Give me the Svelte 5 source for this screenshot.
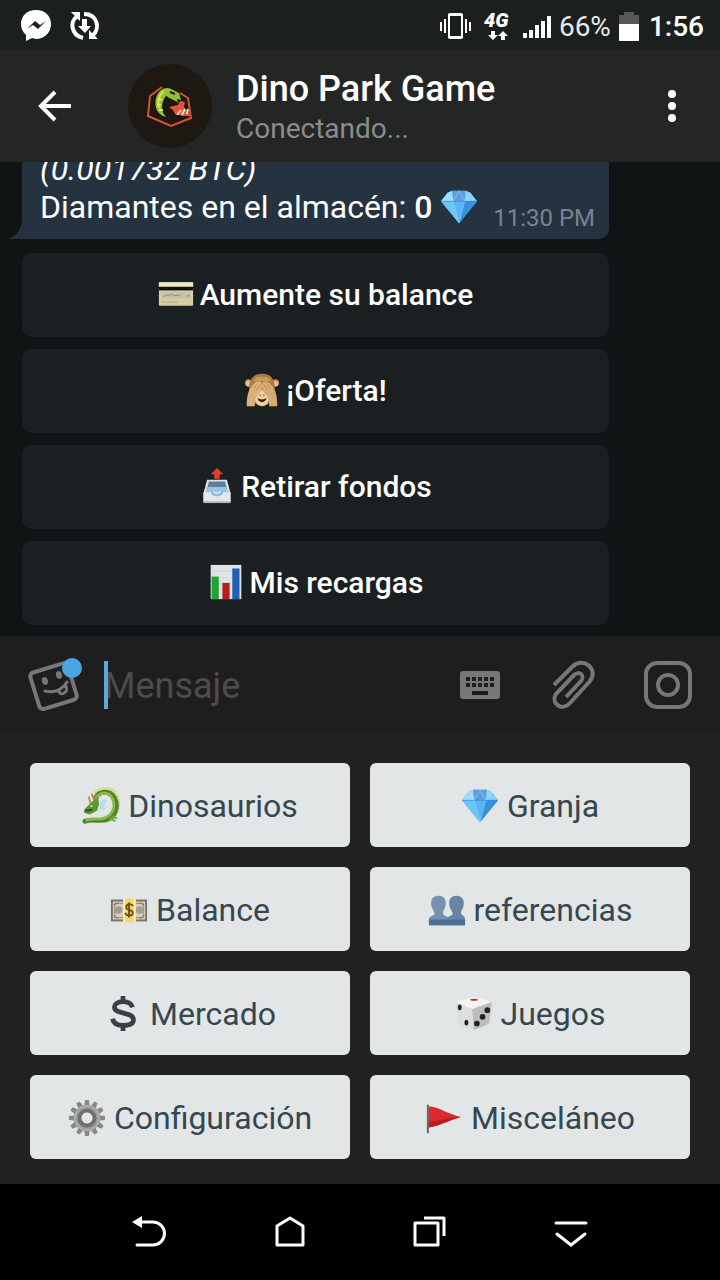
<script lang="ts">
  type Item = { icon: string; label: string }

  const actions: Item[] = [
    { icon: 'card', label: 'Aumente su balance' },
    { icon: 'monkey', label: '¡Oferta!' },
    { icon: 'outbox', label: 'Retirar fondos' },
    { icon: 'chart', label: 'Mis recargas' },
  ]

  const keys: Item[] = [
    { icon: 'dragon', label: 'Dinosaurios' },
    { icon: 'gem', label: 'Granja' },
    { icon: 'cash', label: 'Balance' },
    { icon: 'people', label: 'referencias' },
    { icon: 'dollar', label: 'Mercado' },
    { icon: 'die', label: 'Juegos' },
    { icon: 'gear', label: 'Configuración' },
    { icon: 'flag', label: 'Misceláneo' },
  ]

  const teeth = Array.from({ length: 12 }, (_, i) => i * 30)
  const keyDots = [0, 1, 2, 3, 4]

  let message = $state('')
</script>

<!-- every emoji is drawn on a 40x40 grid -->
{#snippet emoji(name: string)}
  <svg class="emoji" viewBox="0 0 40 40" aria-hidden="true">
    {#if name === 'card'}
      <rect x="1" y="7" width="38" height="26" rx="1" fill="#d6cda6" />
      <rect x="1" y="7" width="38" height="5" fill="#efe6c0" />
      <rect x="1" y="12" width="38" height="4" fill="#11110c" />
      <rect x="4" y="18" width="32" height="7" fill="#c6c2a8" />
      <path d="M6 23l3-2 2 1 4-2 2 2 8-1M32 22h4" fill="none" stroke="#8d8f88" />
      <path d="M4 29h18" stroke="#c4b98f" stroke-width="2" />
    {:else if name === 'monkey'}
      <circle cx="5" cy="12" r="4" fill="#c38b62" />
      <circle cx="35" cy="12" r="4" fill="#c38b62" />
      <circle cx="5" cy="13" r="3" fill="#eabf9d" />
      <circle cx="35" cy="13" r="3" fill="#eabf9d" />
      <path d="M20 2C8 2 5 11 6 20c1 10 6 18 14 18s13-8 14-18C35 11 32 2 20 2z" fill="#a87b42" />
      <path d="M20 6c-3-2-8 0-10 4h20c-2-4-7-6-10-4z" fill="#c79b5c" />
      <ellipse cx="20" cy="29" rx="8" ry="9" fill="#ecd2a0" />
      <path d="M15 29c2 2 8 2 10 0-1 6-9 6-10 0z" fill="#39180f" />
      <path d="M18 25v2M22 25v2" stroke="#76502e" />
      <path d="M19 11c-3-2-7 0-10 4-3 4-6 9-6 23h9c0-7 0-9 4-13 4-4 5-11 3-14z" fill="#dcb27a" />
      <path d="M21 11c3-2 7 0 10 4 3 4 6 9 6 23h-9c0-7 0-9-4-13-4-4-5-11-3-14z" fill="#d6aa70" />
      <path d="M11 18l3-4M14 20l4-6M29 18l-3-4M26 20l-4-6" stroke="#b88b52" />
    {:else if name === 'outbox'}
      <path d="M9 13h22l4 15v10H5V28z" fill="#dbe3ea" />
      <path d="M11 15h18l3 13H8z" fill="#5d7e99" />
      <path d="M10 21h20l2 7H8z" fill="#95c6e8" />
      <path d="M5 27h9c1 7 11 7 12 0h9v11H5z" fill="#e3e8ed" />
      <path d="M14 26c1 6 11 6 12 0" fill="#b9dcf2" stroke="#8db5d3" stroke-width="2" />
      <path d="M5 38h30" stroke="#aab3bb" stroke-width="2" />
      <path d="M20 0l7 7h-4v5h-6V7h-4z" fill="#e2402f" />
    {:else if name === 'chart'}
      <rect x="3" y="1" width="34" height="38" fill="#dfe4e6" />
      <path d="M3 8h34M3 15h34M3 22h34M3 29h34" stroke="#cdd4d7" />
      <rect x="4" y="14" width="8" height="25" fill="#1fa536" />
      <rect x="16" y="21" width="8" height="18" fill="#b5201f" />
      <rect x="27" y="5" width="8" height="34" fill="#1e5fb4" />
    {:else if name === 'gem'}
      <path d="M8 5l5-2h14l5 2 7 9-19 23L1 14z" fill="#3fa6e8" />
      <path d="M8 5l5-2 1 11H1z" fill="#9fdcfa" />
      <path d="M13 3h14l-1 11H14z" fill="#5c9fdd" />
      <path d="M27 3l5 2 7 9H26z" fill="#8bd0fa" />
      <path d="M1 14h13l6 23z" fill="#6ac6f7" />
      <path d="M14 14h12l-6 23z" fill="#58b4f4" />
      <path d="M26 14h13L20 37z" fill="#3592dc" />
      <path d="M8 5l6 9 6-11 6 11 6-9M14 14l6 23 6-23" fill="none" stroke="#bde9ff" stroke-opacity=".4" />
      <path d="M1 14h38" stroke="#2f86cc" stroke-opacity=".6" />
    {:else if name === 'dragon'}
      <path d="M14 7C20 0 32 0 36 9c5 10 1 22-8 26" fill="none" stroke="#d8d66b" stroke-width="4" stroke-dasharray="2 1" />
      <path d="M14 12C18 4 29 3 34 11c5 9 1 20-7 23-7 3-15-1-24 2" fill="none" stroke="#4a862b" stroke-width="5" stroke-linecap="round" />
      <path d="M15 11C20 5 28 5 32 12c4 9 0 17-7 20-6 3-13 0-20 3" fill="none" stroke="#8cba4b" stroke-width="3" stroke-linecap="round" />
      <path d="M17 10l-6 5-8 8-1 4 6 2 8-4 2-7z" fill="#5c9636" />
      <path d="M3 25l8-1" stroke="#29551f" stroke-width="2" />
      <path d="M9 17L7 10M13 14l-3-7" stroke="#c68b52" stroke-width="2" />
      <circle cx="10" cy="20" r="1" fill="#fff8a0" />
      <path d="M20 23c-2-6 2-11 6-9-3 2-2 6-5 9zM22 24l4-3" fill="#b9e2ee" stroke="#a4d3e2" />
      <path d="M29 33l6 3M31 31l6 2" stroke="#73a842" stroke-width="2" />
    {:else if name === 'cash'}
      <rect x="1" y="9" width="38" height="23" fill="#77736a" />
      <rect x="3" y="11" width="34" height="19" fill="#d3cec0" />
      <rect x="5" y="13" width="30" height="15" fill="none" stroke="#8d877b" />
      <circle cx="9" cy="20" r="4" fill="#a49e91" />
      <circle cx="31" cy="20" r="4" fill="#a49e91" />
      <path d="M4 15l5-3M4 26l4 3M36 15l-5-3M36 26l-4 3" stroke="#9a5f58" />
      <rect x="14" y="8" width="13" height="25" fill="#f1d876" />
      <path d="M15 8v25M26 8v25" stroke="#fff0a4" stroke-width="2" />
      <path d="M24 16c-1-3-7-3-7 1s7 2 7 6-7 4-8 0M20 12v16" fill="none" stroke="#70511a" stroke-width="2" />
    {:else if name === 'people'}
      <path d="M11 5c7 0 9 6 7 12-1 3-3 5-2 7 1 3 6 2 6 6v6H1v-6c0-4 5-3 6-6 0-2-2-4-3-7C2 11 4 5 11 5z" fill="#7592ad" />
      <path d="M30 5c7 0 9 6 7 12-1 3-3 5-2 7 1 2 4 2 4 6v6H20v-6c0-4 5-3 6-6 0-2-2-4-3-7-2-6 0-12 7-12z" fill="#6685a3" />
      <path d="M1 30h38v6H1z" fill="#4c7094" />
    {:else if name === 'dollar'}
      <path d="M30 13c-1-4-4-6-10-6-6 0-9 3-9 6 0 8 20 4 20 13 0 4-4 6-11 6-6 0-10-2-11-7" fill="none" stroke="#3b4042" stroke-width="5" />
      <path d="M20 1v6M20 32v6" stroke="#3b4042" stroke-width="5" />
    {:else if name === 'die'}
      <path d="M20 2L3 6q-2 1-2 4l3 20q0 2 2 3l12 4q3 1 6 0l12-7q2-1 2-3l2-17q0-3-3-4z" fill="#dededd" />
      <path d="M20 2L3 6q-2 1-1 2l14 6q2 1 4 0l17-6q1-1-1-2z" fill="#f5f4f2" />
      <path d="M18 15l19-7q2 1 1 5l-2 15q0 2-2 3l-14 6z" fill="#bcbdbd" />
      <ellipse cx="20" cy="5" rx="4" ry="1" fill="#c9292b" />
      <g fill="#202224">
        <ellipse cx="5" cy="13" rx="2" ry="3" />
        <ellipse cx="12" cy="29" rx="2" ry="3" />
        <circle cx="34" cy="16" r="3" />
        <circle cx="29" cy="23" r="3" />
        <circle cx="23" cy="30" r="3" />
      </g>
    {:else if name === 'gear'}
      {#each teeth as angle (angle)}
        <path d="M17 8l1-7h4l1 7z" fill="#858789" transform="rotate({angle} 20 20)" />
      {/each}
      <circle cx="20" cy="20" r="10" fill="none" stroke="#9c9ea0" stroke-width="8" />
      <circle cx="20" cy="20" r="8" fill="none" stroke="#6d6f71" stroke-width="4" />
      <circle cx="20" cy="20" r="13" fill="none" stroke="#b8babb" />
    {:else if name === 'flag'}
      <path d="M3 6v30" stroke="#5c6265" stroke-width="2" />
      <path d="M4 8c10 0 20 8 34 11C26 22 17 28 4 30z" fill="#d92b2b" />
      <path d="M4 24c12-1 22-5 34-5C26 22 17 28 4 30z" fill="#b81e24" />
    {/if}
  </svg>
{/snippet}

<div class="screen">
  <div class="status">
    <svg width="32" height="32" viewBox="0 0 32 32" aria-label="Messenger">
      <path d="M16 0C7 0 1 6 1 14c0 5 2 8 5 11v6l6-3 4 1c9 0 15-7 15-15S25 0 16 0z" fill="#fff" />
      <path d="M7 19l8-8 5 4 6-4-8 8-5-4z" fill="#1b1f1e" />
    </svg>
    <svg width="30" height="30" viewBox="0 0 30 30" aria-label="Sincronizando">
      <path d="M8 5C-1 10 1 24 13 27M14 3c14 0 16 15 9 21" fill="none" stroke="#fff" stroke-width="4" />
      <path d="M1 1h9v9zM19 19v9h9zM12 8h5v7h4l-6 7-7-7h4z" fill="#fff" />
    </svg>
    <div class="status-right">
      <svg width="32" height="28" viewBox="0 0 32 28" fill="none" stroke="#fff" aria-label="Vibración">
        <rect x="10" y="2" width="13" height="24" rx="1" stroke-width="2" />
        <path d="M9 3h15M9 25h15" stroke-width="2" />
        <path d="M6 7v14M27 7v14M2 10v9M31 10v9" stroke-width="2" />
      </svg>
      <svg class="network" width="36" height="36" viewBox="-5 -4 36 36" aria-label="4G">
        <text x="0" y="15">4G</text>
        <path d="M7 19h4v4h3l-5 5-5-5h3zM17 28h4v-4h3l-5-5-5 5h3z" fill="#fff" />
      </svg>
      <svg width="28" height="24" viewBox="0 0 28 24" fill="#fff" aria-label="Señal">
        <path d="M0 19h4v5H0zM6 16h4v8H6zM12 11h4v13h-4zM18 7h4v17h-4zM24 2h4v22h-4z" />
      </svg>
      <span class="percent">66%</span>
      <svg width="20" height="30" viewBox="0 0 20 30" aria-label="Batería">
        <path d="M5 1h10v3h5v9H0V4h5z" fill="#555857" />
        <path d="M0 13h20v17H0z" fill="#fff" />
      </svg>
      <span class="clock">1:56</span>
    </div>
  </div>

  <header>
    <button class="icon-button" aria-label="Atrás">
      <svg width="34" height="32" viewBox="0 0 34 32" fill="none" stroke="#fff" stroke-width="4">
        <path d="M17 2L3 16l14 14M3 16h30" />
      </svg>
    </button>
    <svg class="avatar" width="84" height="84" viewBox="0 0 84 84" aria-hidden="true">
      <circle cx="42" cy="42" r="42" fill="#1e1812" />
      <path d="M34 23l-12 9-2 20 23 10 20-8-3-20-8-5" fill="none" stroke="#d35432" stroke-width="2" />
      <path d="M38 53C26 50 25 36 31 28c4-5 10-5 14-2l6 3 2 7-4-1 1 4-9-5c-2-3-4-2-5 1-3 7-3 12 2 18z" fill="#93bf34" />
      <path d="M31 44c-2-7 0-13 5-17M30 35l4 1M29 40l4 1M31 46l4 0" fill="none" stroke="#d8e55d" stroke-width="2" />
      <path d="M41 43l9-2 2-4 5 1-1 5 7 9-9 0-7-2-2-4z" fill="#df5735" />
      <path d="M49 51l4-5M54 51l3-6M59 50l1-5" stroke="#e7ded2" stroke-width="2" />
      <path d="M42 28l5 2M41 35l8 4M46 52l10 1" stroke="#20180f" stroke-width="2" />
    </svg>
    <div class="peer">
      <h1>Dino Park Game</h1>
      <p>Conectando...</p>
    </div>
    <button class="icon-button" aria-label="Más opciones">
      <svg width="10" height="34" viewBox="0 0 10 34" fill="#fff">
        <circle cx="5" cy="5" r="4" /><circle cx="5" cy="17" r="4" /><circle cx="5" cy="29" r="4" />
      </svg>
    </button>
  </header>

  <main>
    <div class="bubble">
      <p>
        <em>(0.001732 BTC)</em><br />
        Diamantes en el almacén: <b>0</b>
        {@render emoji('gem')}
      </p>
      <time>11:30 PM</time>
      <svg class="tail" width="12" height="28" viewBox="0 0 12 28" aria-hidden="true">
        <path d="M12 6v22H0v-1C8 24 12 17 12 6z" fill="#25323f" />
      </svg>
    </div>
    <div class="actions">
      {#each actions as item (item.label)}
        <button>{@render emoji(item.icon)}<span>{item.label}</span></button>
      {/each}
    </div>
  </main>

  <form class="composer" onsubmit={(e) => e.preventDefault()}>
    <button type="button" class="icon-button" aria-label="Stickers">
      <svg width="54" height="54" viewBox="0 0 54 54" fill="none" stroke="#777" stroke-width="3">
        <rect x="6" y="9" width="39" height="38" rx="4" stroke-width="4" transform="rotate(-17 26 28)" />
        <path d="M17 33c9 2 17-1 22-9M30 32c2 7 11 3 8-4" stroke-linecap="round" />
        <ellipse cx="17" cy="23" rx="3" ry="4" fill="#777" stroke="none" transform="rotate(-17 17 23)" />
        <ellipse cx="31" cy="17" rx="3" ry="4" fill="#777" stroke="none" transform="rotate(-17 31 17)" />
        <circle cx="44" cy="10" r="10" fill="#4ba5e4" stroke="none" />
      </svg>
    </button>
    <div class="field">
      <input type="text" placeholder="Mensaje" aria-label="Mensaje" bind:value={message} />
    </div>
    <div class="tools">
      <button type="button" class="icon-button" aria-label="Teclado">
        <svg width="40" height="28" viewBox="0 0 40 28">
          <rect width="40" height="28" rx="3" fill="#777" />
          {#each keyDots as i (i)}
            <path d="M{6 + i * 6} 6h4v4h-4zM{6 + i * 6} 12h4v4h-4z" fill="#1e1e1e" />
          {/each}
          <path d="M12 20h16v4H12z" fill="#1e1e1e" />
        </svg>
      </button>
      <button type="button" class="icon-button" aria-label="Adjuntar">
        <svg width="48" height="50" viewBox="-4 0 48 50" fill="none" stroke="#777" stroke-width="4">
          <path d="M2 25L20 7c11-11 27 2 18 14L18 43c-8 9-20 0-14-9l18-19c6-5 11 1 7 6L14 37" />
        </svg>
      </button>
      <button type="button" class="icon-button" aria-label="Cámara">
        <svg width="48" height="48" viewBox="0 0 48 48" fill="none" stroke="#777" stroke-width="4">
          <rect x="2" y="2" width="44" height="44" rx="11" /><circle cx="24" cy="24" r="10" />
        </svg>
      </button>
    </div>
  </form>

  <div class="keyboard">
    {#each keys as item (item.label)}
      <button>{@render emoji(item.icon)}<span>{item.label}</span></button>
    {/each}
  </div>

  <nav>
    <button class="icon-button" aria-label="Volver">
      <svg width="36" height="36" viewBox="0 0 36 36" fill="none" stroke="#fff" stroke-width="3">
        <path d="M10 8h12a11 11 0 0 1 0 23H6" stroke-linecap="round" />
        <path d="M1 8l10-6v12z" fill="#fff" stroke="none" />
      </svg>
    </button>
    <button class="icon-button" aria-label="Inicio">
      <svg width="36" height="36" viewBox="0 0 36 36" fill="none" stroke="#fff" stroke-width="3" stroke-linejoin="round">
        <path d="M5 12L18 4l13 8v19H5z" />
      </svg>
    </button>
    <button class="icon-button" aria-label="Recientes">
      <svg width="36" height="36" viewBox="0 0 36 36" fill="none" stroke="#fff" stroke-width="3" stroke-linejoin="round">
        <path d="M3 9h23v22H3zM12 4h20v18" />
      </svg>
    </button>
    <button class="icon-button" aria-label="Ocultar">
      <svg width="36" height="36" viewBox="0 0 36 36" fill="none" stroke="#fff" stroke-width="3" stroke-linecap="round">
        <path d="M3 9h30M4 20l14 11 14-11" />
      </svg>
    </button>
  </nav>
</div>

<style>
  :global(body) {
    background: #000;
  }
  .screen {
    display: flex;
    flex-direction: column;
    height: 100vh;
    font-family: Roboto, 'Liberation Sans', sans-serif;
    color: #fff;
  }
  button {
    font: inherit;
    border: 0;
    cursor: pointer;
  }
  svg {
    display: block;
    flex: none;
  }
  .icon-button {
    display: flex;
    padding: 0;
    background: none;
  }
  .status {
    display: flex;
    align-items: center;
    gap: 18px;
    height: 50px;
    padding: 2px 16px 0 20px;
    box-sizing: border-box;
    background: #1b1f1e;
    font-size: 28px;
  }
  .status-right {
    display: flex;
    align-items: center;
    gap: 8px;
    margin-left: auto;
  }
  .network text {
    font: italic 900 20px Roboto, sans-serif;
    fill: #fff;
  }
  .percent {
    color: #e8e9e9;
  }
  .clock {
    margin-left: 2px;
    font-weight: 500;
  }
  header {
    display: flex;
    align-items: center;
    height: 112px;
    padding: 0 43px 0 38px;
    box-sizing: border-box;
    background: #232625;
  }
  .avatar {
    margin: 0 24px 0 56px;
  }
  .peer {
    flex: 1;
    padding-top: 3px;
  }
  h1 {
    margin: 0;
    font-size: 36px;
    line-height: 42px;
    font-weight: 500;
  }
  .peer p {
    margin: 0;
    font-size: 28px;
    line-height: 38px;
    color: #8a8d8c;
  }
  main {
    flex: 1;
    min-height: 0;
    display: flex;
    flex-direction: column;
    justify-content: flex-end;
    gap: 14px;
    padding: 0 111px 11px 22px;
    overflow: hidden;
    background: #101414;
  }
  .bubble {
    position: relative;
    display: flex;
    justify-content: space-between;
    align-items: flex-end;
    padding: 10px 14px 7px 18px;
    border-radius: 10px 10px 10px 0;
    background: #25323f;
  }
  .bubble p {
    margin: 0;
    padding-bottom: 6px;
    font-size: 32px;
    line-height: 38px;
  }
  .bubble b {
    font-weight: 500;
  }
  .bubble .emoji {
    display: inline-block;
    width: 38px;
    height: 38px;
    vertical-align: bottom;
  }
  .bubble time {
    font-size: 24px;
    line-height: 28px;
    color: #77838f;
  }
  .tail {
    position: absolute;
    right: 100%;
    bottom: 0;
  }
  .actions {
    display: grid;
    gap: 12px;
  }
  .actions button,
  .keyboard button {
    display: flex;
    align-items: center;
    justify-content: center;
    gap: 8px;
    height: 84px;
    padding: 0;
  }
  .actions button {
    gap: 6px;
    padding-bottom: 2px;
    border-radius: 10px;
    background: #1a2022;
    color: #fff;
    font-size: 30px;
    font-weight: 500;
  }
  .actions .emoji {
    width: 36px;
    height: 36px;
  }
  .composer {
    display: flex;
    align-items: center;
    gap: 22px;
    height: 98px;
    padding: 0 28px;
    box-sizing: border-box;
    background: #1e1e1e;
  }
  .field {
    position: relative;
    flex: 1;
    min-width: 0;
  }
  /* text cursor, drawn over the placeholder */
  .field::before {
    content: '';
    position: absolute;
    left: 0;
    top: 0;
    bottom: 0;
    width: 4px;
    background: #5fa8dc;
  }
  input {
    display: block;
    width: 100%;
    height: 48px;
    padding: 2px 0 0;
    box-sizing: border-box;
    border: 0;
    outline: 0;
    background: none;
    color: #fff;
    font: inherit;
    font-size: 36px;
  }
  input::placeholder {
    color: #4c4c4c;
    opacity: 1;
  }
  .tools {
    display: flex;
    align-items: center;
    gap: 48px;
  }
  .keyboard {
    display: grid;
    grid-template-columns: 1fr 1fr;
    gap: 20px;
    padding: 29px 30px 25px;
    background: #222;
  }
  .keyboard button {
    padding-top: 2px;
    border-radius: 6px;
    background: #e2e6e6;
    color: #36474f;
    font-size: 32px;
  }
  .keyboard .emoji {
    width: 38px;
    height: 38px;
  }
  nav {
    display: flex;
    align-items: center;
    justify-content: space-between;
    height: 96px;
    padding: 0 131px;
    background: #000;
  }
</style>
